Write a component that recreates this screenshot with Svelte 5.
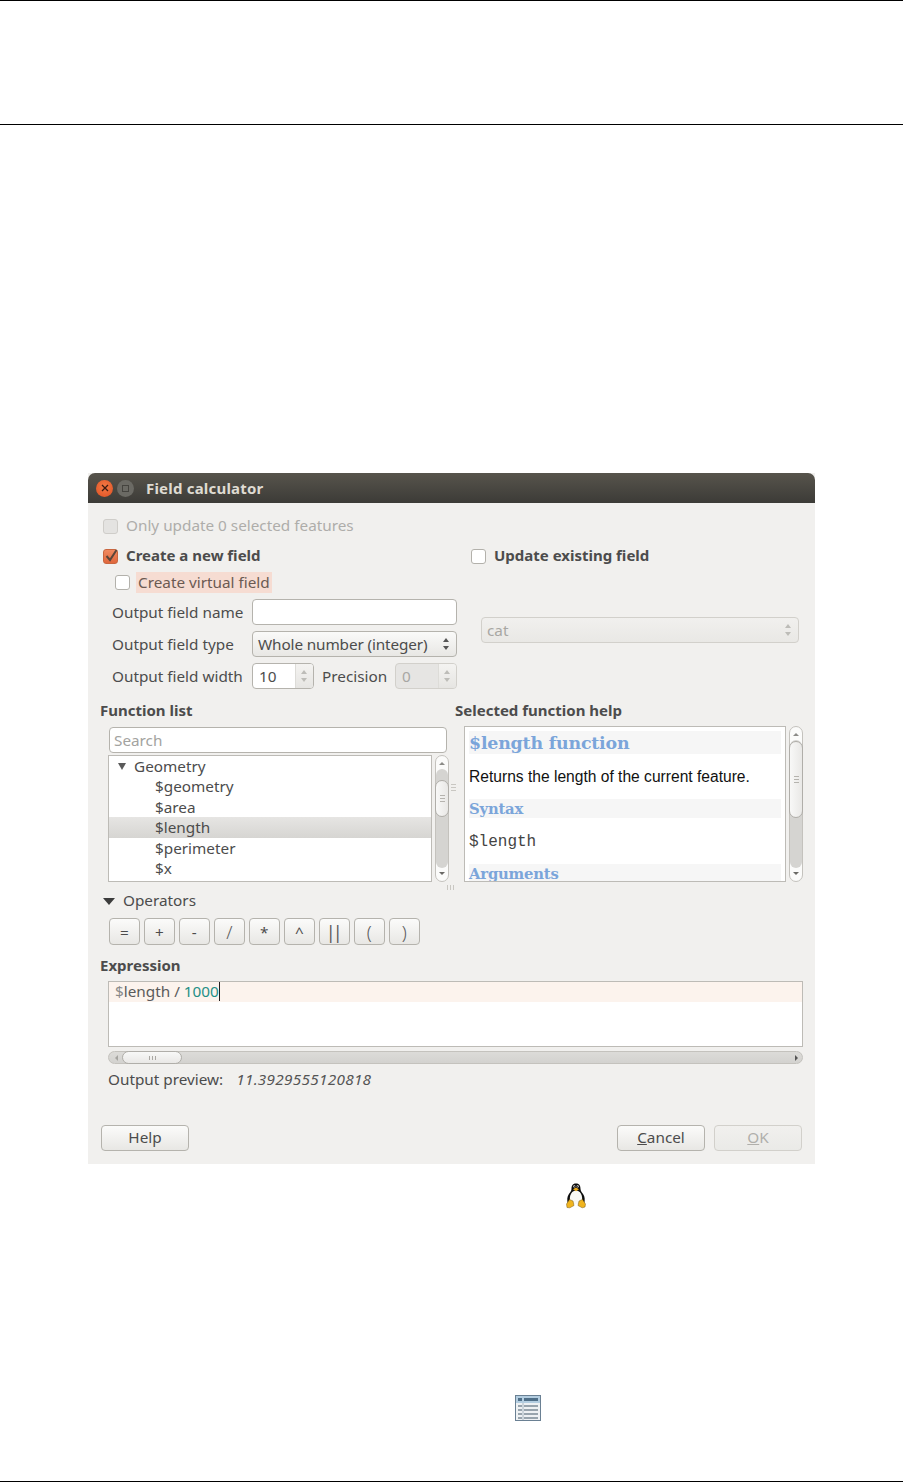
<script>
  const ops = ['=', '+', '-', '/', '*', '^', '||', '(', ')'];
  const fns = ['$geometry', '$area', '$length', '$perimeter', '$x'];
</script>

<div class="page">
  <header class="head"></header>

  <section class="dialog">
    <div class="title">
      <span class="wbtn close"><svg viewBox="0 0 8 8" width="8" height="8"><path d="M1 1l6 6M7 1l-6 6" stroke="#3c1a10" stroke-width="1.3"/></svg></span>
      <span class="wbtn menu"><i></i></span>
      <span class="title-text">Field calculator</span>
    </div>

    <div class="body">
      <div class="row check-row disabled"><span class="cb off"></span><span class="lbl">Only update 0 selected features</span></div>

      <div class="two">
        <div class="row check-row strong">
          <span class="cb on"><svg viewBox="0 0 15 15" width="15" height="15"><path d="M3.500 7l3.500 4L13.500 1" fill="none" stroke="#5a463a" stroke-width="2"/></svg></span><span class="lbl">Create a new field</span>
        </div>
        <div class="row check-row strong"><span class="cb"></span><span class="lbl">Update existing field</span></div>
      </div>

      <div class="two">
        <div>
          <div class="virtual"><span class="cb"></span><span class="virt-label">Create virtual field</span></div>
          <div class="form">
            <span>Output field name</span>
            <div class="field"></div>
            <span>Output field type</span>
            <div class="combo"><span class="wide">Whole number (integer)</span><span class="ud"></span></div>
            <span>Output field width</span>
            <div class="spins">
              <div class="spin"><span class="spin-val">10</span><span class="spin-btn"><span class="ud light"></span></span></div>
              <span class="prec">Precision</span>
              <div class="spin small dis"><span class="spin-val">0</span><span class="spin-btn"><span class="ud light"></span></span></div>
            </div>
          </div>
        </div>
        <div class="combo cat"><span>cat</span><span class="ud light"></span></div>
      </div>

      <div class="panes-head">
        <h4>Function list</h4>
        <h4>Selected function help</h4>
      </div>

      <div class="panes">
        <div class="left">
          <div class="lcol">
            <div class="search">Search</div>
            <div class="tree-wrap">
              <div class="tree">
                <div class="node"><span class="tri"></span>Geometry</div>
                {#each fns as f}
                  <div class="leaf" class:sel={f === '$length'}>{f}</div>
                {/each}
              </div>
              <div class="vbar">
                <span class="arr up"></span>
                <div class="track t1"></div>
                <div class="thumb th1"><i></i><i></i><i></i></div>
                <span class="arr down"></span>
              </div>
            </div>
          </div>
          <div class="grip-h"><i></i><i></i><i></i></div>
          <div class="grip-v"><i></i><i></i><i></i></div>
        </div>
        <div class="right">
          <div class="help">
            <h2>$length function</h2>
            <p>Returns the length of the current feature.</p>
            <h3>Syntax</h3>
            <code>$length</code>
            <h3 class="clip">Arguments</h3>
          </div>
          <div class="vbar big">
            <span class="arr up"></span>
            <div class="track t2"></div>
            <div class="thumb th2"><i></i><i></i><i></i></div>
            <span class="arr down"></span>
          </div>
        </div>
      </div>

      <div class="ops-head"><span class="tri big-tri"></span><span class="lbl">Operators</span></div>
      <div class="ops">
        {#each ops as o}<div class="opbtn" class:tall={o === '/' || o === '(' || o === ')'} class:pipes={o === '||'}>{o}</div>{/each}
      </div>

      <h4 class="expr-head">Expression</h4>
      <div class="editor">
        <div class="line"><span class="dollar">$</span>length / <span class="num">1000</span><span class="caret"></span></div>
      </div>
      <div class="hbar">
        <span class="harr l"></span>
        <div class="hthumb"><i></i><i></i><i></i></div>
        <span class="harr r"></span>
      </div>
      <div class="preview"><span>Output preview:</span><em>11.3929555120818</em></div>

      <div class="footer">
        <div class="btn"><span class="lbl">Help</span></div>
        <div class="end">
          <div class="btn"><span class="lbl"><u>C</u>ancel</span></div>
          <div class="btn dis"><span class="lbl"><u>O</u>K</span></div>
        </div>
      </div>
    </div>
  </section>

  <div class="tux-row">
    <svg width="20" height="26" viewBox="0 0 20 26">
      <path d="M10 .5C6.300.5 5.500 3 5.500 6c0 2.200-1.800 3.800-3 5.800C1.200 14 .9 17 1.800 20.500h16.400c.9-3.500.6-6.500-.7-8.700-1.200-2-3-3.600-3-5.800 0-3-.8-5.500-4.500-5.500z" fill="#0d0d0d"/>
      <path d="M10 7.500c-3 0-5 2.400-5.800 5.200-.7 2.600-.5 5.500.8 8.300h10c1.300-2.800 1.500-5.700.8-8.300C15 9.900 13 7.500 10 7.500z" fill="#f8f8f4"/>
      <path d="M7 6.200L10 4.600l3 1.600L10 8.300z" fill="#e9a91c"/>
      <circle cx="8.300" cy="3.400" r="1.100" fill="#eee"/><circle cx="11.700" cy="3.400" r="1.100" fill="#eee"/>
      <circle cx="8.600" cy="3.600" r=".5" fill="#000"/><circle cx="11.400" cy="3.600" r=".5" fill="#000"/>
      <path d="M.5 21l3-4.500 3.500 1.500 1 4.500-4.200 2.300L1 24.500zM19.500 21l-3-4.500-3.500 1.500-1 4.500 4.200 2.300 2.800-.8z" fill="#f0b41f" stroke="#7a5a10" stroke-width=".5"/>
    </svg>
  </div>

  <div class="table-row">
    <svg width="26" height="26" viewBox="0 0 26 26">
      <rect x=".5" y=".5" width="25" height="25" fill="#eef1f3" stroke="#6a8093"/>
      <rect x="1" y="1" width="24" height="7" fill="#b3cde0"/>
      <path d="M3 3h4v3H3zM9 3h14v3H9z" fill="#4f6f88"/>
      <path d="M3 10h4v2H3zM9 10h14v2H9zM3 14h4v2H3zM9 14h14v2H9zM3 18h4v2H3zM9 18h14v2H9zM3 22h4v2H3zM9 22h14v2H9z" fill="#98a4ad"/>
      <path d="M8 8v17" stroke="#a8b6c0"/>
    </svg>
  </div>

  <footer class="foot"></footer>
</div>

<style>
  :global(body) { margin: 0; background: #fff; }
  .page {
    height: 1482px; box-sizing: border-box; position: relative;
    display: flex; flex-direction: column;
    font-family: "Noto Sans", sans-serif; font-size: 15.3px; color: #4c4c4c;
    overflow: hidden;
  }
  .head { border-top: 1px solid #000; border-bottom: 1px solid #000; height: 123px; flex: none; }
  .dialog { margin: 348px 0 0 88px; width: 727px; height: 691px; background: #f1f0ee; flex: none; display: flex; flex-direction: column; }
  .title {
    height: 30px; display: flex; align-items: center; flex: none;
    background: linear-gradient(#57544c, #3c3b37);
    border-radius: 7px 7px 0 0; padding-left: 8px;
  }
  .wbtn { width: 17px; height: 17px; border-radius: 50%; display: flex; align-items: center; justify-content: center; }
  .close { background: radial-gradient(circle at 50% 40%, #f47a45, #dd4f22); }
  .menu { background: #6b6a64; margin-left: 4px; }
  .menu i { width: 7px; height: 7px; border: 1px solid #45443f; box-sizing: border-box; }
  .title-text { margin-left: 12px; font-weight: 700; color: #dfdbd2; font-size: 15px; letter-spacing: .2px; padding-bottom: 1px; }

  .lbl { position: relative; top: -1px; }
  .body { padding: 8px 12px 0; flex: 1; display: flex; flex-direction: column; }
  .row { height: 30px; }
  .check-row { display: flex; align-items: center; padding-left: 3px; gap: 8px; }
  .disabled { color: #aeadaa; }
  .strong { font-weight: 700; font-size: 15px; }
  .cb {
    width: 15px; height: 15px; box-sizing: border-box; flex: none;
    border: 1px solid #b3b1ab; border-radius: 3px; background: #fff;
  }
  .cb.off { background: #e4e3e1; border-color: #cfcdc9; }
  .cb.on { background: linear-gradient(#f08a60, #e0673c); border-color: #c9663f; }
  .cb.on svg { display: block; margin: -1px; overflow: visible; }
  .two { display: grid; grid-template-columns: 357px 1fr; column-gap: 14px; }
  .two .check-row + .check-row { padding-left: 0; }
  .virtual { display: flex; align-items: center; margin: 1px 0 0 15px; height: 21px; gap: 6px; }
  .virt-label { background: #f6dcd2; padding: 0 2px; height: 21px; line-height: 20px; color: #6b5a52; }
  .form { margin-top: 6px; display: grid; grid-template-columns: 140px 205px; row-gap: 6px; padding-left: 12px; align-items: center; }
  .field, .combo, .spin { height: 26px; box-sizing: border-box; border: 1px solid #b5b3ad; border-radius: 4px; }
  .field { background: #fff; }
  .combo {
    display: flex; align-items: center; justify-content: space-between; padding: 0 5px;
    background: linear-gradient(#fafaf9, #e8e7e4);
  }
  .wide { letter-spacing: -.12px; }
  .cat {
    width: 318px; margin: 46px 0 0 10px; color: #a8a7a3; align-self: start;
    background: linear-gradient(#f1f0ee, #e9e8e5); border-color: #d2d0cb;
  }
  .ud { width: 7px; height: 12px; position: relative; flex: none; margin-right: 1px; }
  .ud::before, .ud::after {
    content: ""; position: absolute; left: 0; border-left: 3.5px solid transparent; border-right: 3.5px solid transparent;
  }
  .ud::before { top: 0; border-bottom: 4px solid #555; }
  .ud::after { bottom: 0; border-top: 4px solid #555; }
  .ud.light::before { border-bottom-color: #bdbcb8; }
  .ud.light::after { border-top-color: #bdbcb8; }
  .spins { display: flex; align-items: center; }
  .spin { width: 62px; display: flex; overflow: hidden; background: #fff; }
  .spin.small { margin-left: auto; }
  .spin.dis { border-color: #d2d0cb; background: #e6e5e3; color: #a8a7a3; }
  .spin-val { flex: 1; padding-left: 6px; line-height: 24px; }
  .spin-btn { width: 17px; border-left: 1px solid #dddcd8; background: linear-gradient(#f4f3f1, #e6e5e2); display: flex; align-items: center; justify-content: center; }
  .prec { margin-left: 8px; }

  h4 { margin: 0; font-size: 15px; font-weight: 700; line-height: 18px; height: 20px; }
  .panes-head { margin-top: 12px; display: grid; grid-template-columns: 355px 1fr; }
  .panes { margin-top: 5px; display: grid; grid-template-columns: 355px 1fr; grid-template-rows: 156px; height: 156px; }
  .left { position: relative; padding-left: 8px; }
  .lcol { display: flex; flex-direction: column; height: 100%; }
  .search {
    margin: 1px 0 2px 1px; width: 338px; height: 26px; box-sizing: border-box; background: #fff;
    border: 1px solid #b5b3ad; border-radius: 4px; color: #a3a3a0; padding-left: 4px; line-height: 24px; flex: none;
  }
  .tree-wrap { display: flex; gap: 3px; flex: 1; min-height: 0; }
  .tree { width: 324px; box-sizing: border-box; border: 1px solid #bdbbb6; background: #fff; line-height: 21px; overflow: hidden; }
  .node { display: flex; align-items: center; padding-left: 9px; gap: 8px; height: 20.4px; }
  .tri { width: 0; height: 0; border-left: 4.5px solid transparent; border-right: 4.5px solid transparent; border-top: 7px solid #5a5a5a; flex: none; }
  .leaf { padding-left: 46px; height: 20.4px; }
  .leaf.sel { background: linear-gradient(#e6e5e3, #d6d5d2); }
  .vbar {
    width: 14px; box-sizing: border-box; border: 1px solid #c4c2bd; border-radius: 7px; background: #fbfbfa;
    position: relative; flex: none;
  }
  .arr { position: absolute; left: 3px; border-left: 3px solid transparent; border-right: 3px solid transparent; }
  .arr.up { top: 6px; border-bottom: 3.500px solid #8c8b87; }
  .arr.down { bottom: 6px; border-top: 3.500px solid #6a6965; }
  .track { position: absolute; left: 0; right: 0; background: #d5d4d1; border-radius: 6px; }
  .t1 { top: 13px; bottom: 13px; }
  .t2 { top: 13px; bottom: 13px; }
  .thumb {
    position: absolute; left: -1px; right: -1px; box-sizing: border-box;
    border: 1px solid #b0aea9; border-radius: 7px; background: linear-gradient(90deg, #f8f8f7, #e9e8e6);
    display: flex; flex-direction: column; justify-content: center; align-items: center; gap: 2px;
  }
  .thumb i { width: 5px; height: 1px; background: #b5b3ae; }
  .th1 { top: 24px; height: 37px; }
  .th2 { top: 14px; height: 77px; }
  .grip-h { position: absolute; left: 351px; top: 58px; display: flex; flex-direction: column; gap: 2px; }
  .grip-h i { width: 5px; height: 1px; background: #c9c7c2; }
  .grip-v { position: absolute; left: 347px; bottom: -8px; display: flex; gap: 2px; }
  .grip-v i { width: 1px; height: 5px; background: #c9c7c2; }
  .right { display: flex; gap: 3px; padding-left: 9px; min-height: 0; }
  .help {
    width: 322px; height: 156px; box-sizing: border-box; background: #fff; border: 1px solid #bdbbb6; padding: 4px 4px 0; overflow: hidden;
    color: #000;
  }
  h2, h3 { margin: 0; background: #f6f6f6; color: #7ba5da; font-family: "DejaVu Serif", serif; font-weight: 700; }
  h2 { font-size: 17.4px; height: 23px; line-height: 25px; letter-spacing: -.2px; }
  h3 { font-size: 14.8px; height: 19px; line-height: 19px; letter-spacing: -.2px; }
  .help p { margin: 12px 0 0; font: 15.6px/22px "Liberation Sans", sans-serif; height: 20px; color: #111; }
  .help p + h3 { margin-top: 13px; }
  code { display: block; margin-top: 13px; height: 21px; font: 16px/23px "Liberation Mono", monospace; color: #444; }
  .clip { margin-top: 12px; }

  .ops-head { margin-top: 9px; height: 20px; display: flex; align-items: center; padding-left: 3px; gap: 8px; }
  .big-tri { border-left-width: 6px; border-right-width: 6px; border-top: 7px solid #3c3c3c; }
  .ops { margin: 7px 0 0 9px; display: grid; grid-template-columns: repeat(9, 30.5px); column-gap: 4.5px; height: 27px; }
  .opbtn, .btn {
    box-sizing: border-box; border: 1px solid #b5b3ad; border-radius: 4px;
    background: linear-gradient(#fbfbfa, #e8e7e4); display: flex; align-items: center; justify-content: center;
  }
  .opbtn.tall { font-size: 18px; color: #5c5c5c; font-weight: 300; }
  .opbtn.pipes { font-size: 18px; letter-spacing: -3px; padding-right: 3px; color: #5c5c5c; }
  .expr-head { margin-top: 11px; }
  .editor { margin: 5px 0 0 8px; width: 695px; height: 66px; box-sizing: border-box; border: 1px solid #bdbbb6; background: #fff; }
  .line { height: 20px; background: #fcf3ed; padding-left: 6px; line-height: 19px; color: #5a5a5a; display: flex; white-space: pre; }
  .dollar { color: #8a8a8a; }
  .num { color: #1f8f85; }
  .caret { width: 1px; height: 19px; background: #222; }
  .hbar {
    margin: 4px 0 0 8px; width: 695px; height: 13px; box-sizing: border-box; position: relative;
    border: 1px solid #c4c2bd; border-radius: 7px; background: linear-gradient(#dcdbd8, #d3d2cf);
  }
  .hthumb {
    position: absolute; left: 13px; top: -1px; height: 13px; width: 60px; box-sizing: border-box;
    border: 1px solid #b0aea9; border-radius: 7px; background: linear-gradient(#f8f8f7, #e9e8e6);
    display: flex; align-items: center; justify-content: center; gap: 2px;
  }
  .hthumb i { width: 1px; height: 4px; background: #aaa8a3; }
  .harr { position: absolute; top: 3px; border-top: 3px solid transparent; border-bottom: 3px solid transparent; }
  .harr.l { left: 6px; border-right: 3.500px solid #a5a4a0; }
  .harr.r { right: 4px; border-left: 3.500px solid #555; }
  .preview { margin: 6px 0 0 8px; height: 20px; line-height: 18px; display: flex; }
  .preview em { margin-left: 13px; color: #555; letter-spacing: .3px; }
  .footer { margin-top: 35px; display: flex; justify-content: space-between; padding: 0 1px; }
  .end { display: flex; gap: 9px; }
  .btn { width: 88px; height: 26px; }
  .btn.dis { color: #b0afab; border-color: #d2d0cb; background: linear-gradient(#f1f0ee, #eaeae7); }

  .tux-row { margin: 19px 0 0 566px; height: 26px; flex: none; }
  .table-row { margin: 186px 0 0 515px; height: 26px; flex: none; }
  .foot { position: absolute; left: 0; right: 0; bottom: 0; height: 1px; background: #000; }
</style>
